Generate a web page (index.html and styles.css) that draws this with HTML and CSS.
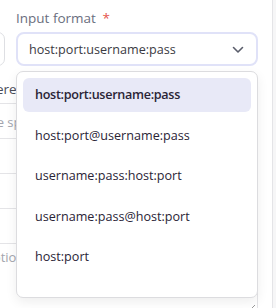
FILE: index.html
```html
<!DOCTYPE html>
<html lang="en">
<head>
    <meta charset="UTF-8">
    <meta name="viewport" content="width=device-width, initial-scale=1.0">
    <title>Proxy import</title>
    <link rel="stylesheet" href="styles.css">
</head>
<body>
    <div class="panel">
        <div class="top-row">
            <div class="field field-left">
                <span class="label">Protocol</span>
                <div class="box"></div>
            </div>
            <div class="field field-format">
                <span class="label">Input format <span class="req">*</span></span>
                <div class="select">
                    <span>host:port:username:pass</span>
                    <svg class="chevron" width="12" height="8" viewBox="0 0 12 8"><path d="M1.5 1.5 L6 6 L10.5 1.5" fill="none" stroke="#5a5d6b" stroke-width="1.6" stroke-linecap="round" stroke-linejoin="round"/></svg>
                </div>
            </div>
        </div>

        <div class="lower">
            <span class="label label-where">Filter where</span>
            <div class="rows">
                <div class="row"><span class="placeholder ph-space">Use space separated values</span></div>
                <div class="row"></div>
                <div class="row"></div>
            </div>
            <div class="area"><span class="placeholder">Description</span><span class="grip"></span></div>
        </div>

        <!-- open dropdown of the Input format select -->
        <ul class="menu">
            <li class="active">host:port:username:pass</li>
            <li>host:port@username:pass</li>
            <li>username:pass:host:port</li>
            <li>username:pass@host:port</li>
            <li>host:port</li>
        </ul>
    </div>
</body>
</html>
```

FILE: styles.css
```css
* {
    box-sizing: border-box;
}
body {
    margin: 0;
    background: #f6f6f7;
    font-family: "Open Sans", "Noto Sans", sans-serif;
    overflow: hidden;
}
.panel {
    position: relative;
    width: 273px;
    height: 308px;
    background: white;
    border-right: 1px solid #e4e4e7;
    overflow: hidden;
}
.top-row {
    display: flex;
    gap: 11px;
    padding-top: 9px;
    margin-left: -100px;
}
.field {
    display: flex;
    flex-direction: column;
}
.field-left {
    width: 105px;
}
.field-format {
    width: 242px;
}
.label {
    font-size: 13.5px;
    color: #6a6e7e;
    height: 23px;
    line-height: 19px;
}
.req {
    color: #e5534b;
    margin-left: 3px;
}
.box {
    height: 34px;
    border: 1px solid #dedfe3;
    border-radius: 7px;
}
.select {
    height: 34px;
    border: 2px solid #e0e2f8;
    border-radius: 8px;
    display: flex;
    align-items: center;
    justify-content: space-between;
    padding: 0 12px 0 11px;
    font-size: 12.6px;
    color: #3a3a42;
}
.chevron {
    margin-top: 1px;
}
.lower {
    margin-left: -60px;
    width: 318px;
    padding-top: 14px;
}
.label-where {
    display: block;
    height: 23px;
    padding-left: 2px;
    color: #4a4c58;
}
.rows {
    border-top: 1px solid #e4e4e7;
}
.row {
    height: 35px;
    border-bottom: 1px solid #e4e4e7;
    font-size: 13px;
    padding: 9px 0 0 0;
}
.placeholder {
    color: #a3a5ae;
    font-size: 13px;
}
.ph-space {
    margin-left: 41px;
}
.area {
    position: relative;
    margin-top: 34px;
    height: 80px;
    border: 1px solid #e4e4e7;
    border-radius: 6px;
    padding: 1px 0 0 14px;
}
.grip {
    position: absolute;
    right: 2px;
    top: 61px;
    width: 6px;
    height: 6px;
    background: linear-gradient(135deg, transparent 45%, #9a9a9a 45%, #9a9a9a 55%, transparent 55%);
}
.menu {
    position: absolute;
    left: 16px;
    top: 71px;
    width: 242px;
    height: 227px;
    margin: 0;
    padding: 6px;
    list-style: none;
    background: white;
    border: 1px solid #dcdcdf;
    border-radius: 7px;
    box-shadow: 0 4px 12px rgba(0, 0, 0, 0.07);
}
.menu li {
    height: 34px;
    line-height: 34px;
    padding: 0 12px;
    margin-bottom: 6.5px;
    border-radius: 6px;
    font-size: 12.6px;
    color: #2a2436;
}
.menu li.active {
    background: #e8e9f7;
    font-weight: 600;
    letter-spacing: -0.3px;
}
```
